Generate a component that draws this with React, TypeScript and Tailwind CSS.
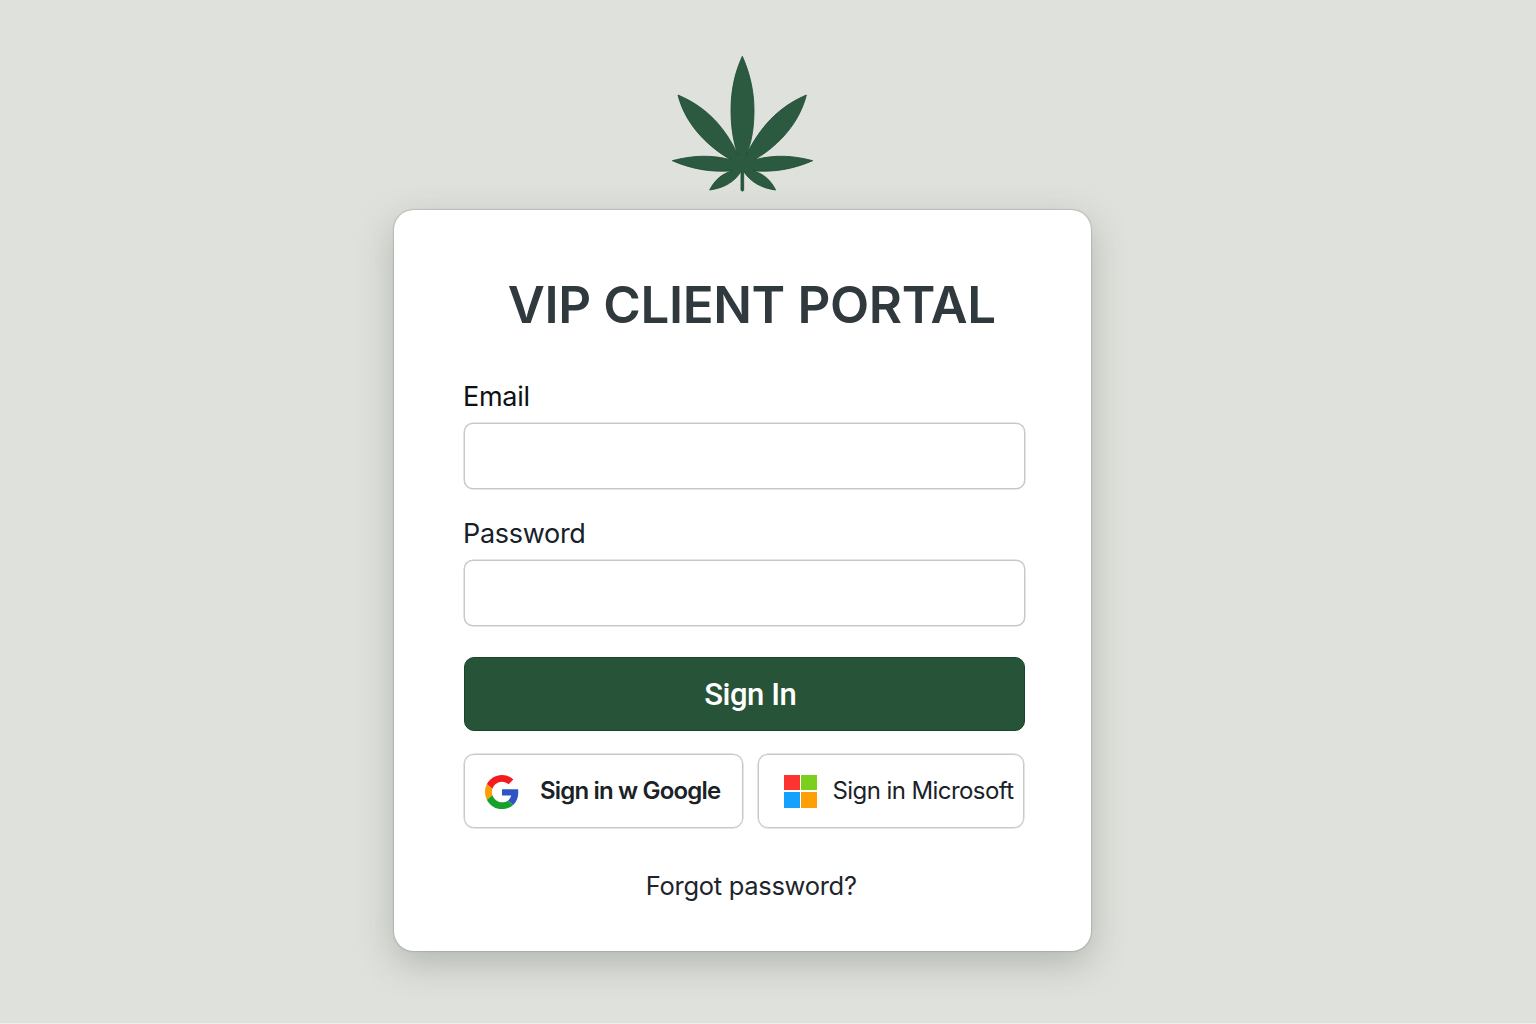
import React from "react";

function Leaf() {
  return (
    <svg width="162" height="152" viewBox="0 0 486 456" className="shrink-0" fill="#2b5a40" aria-hidden="true">
      <g stroke="#1d4b31" strokeWidth="2.5" strokeLinejoin="miter">
        <path d="M241 31C219 78 207 132 207 192C207 247 215 291 228 327C190 246 136 184 48 147C68 228 128 296 206 341C145 325 88 329 31 344C88 369 148 380 211 374C180 383 158 402 143 432C186 426 218 408 237 376L237 433Q241 438 245 433L245 376C265 408 298 426 341 432C326 402 304 383 273 374C336 380 395 369 452 344C395 329 340 325 278 341C354 296 413 228 433 147C346 184 293 246 253 327C268 291 276 247 276 192C276 132 262 78 241 31Z" />
      </g>
    </svg>
  );
}

function GoogleLogo() {
  return (
    <svg width="34" height="34" viewBox="0 0 48 48" className="relative top-[1px] shrink-0" aria-hidden="true">
      <path fill="#f31b1c" d="M24 9.5c3.54 0 6.71 1.22 9.21 3.6l6.85-6.85C35.9 2.38 30.47 0 24 0 14.62 0 6.51 5.38 2.56 13.22l7.98 6.19C12.43 13.72 17.74 9.5 24 9.5z" />
      <path fill="#2f55c5" d="M46.98 24.55c0-1.57-.15-3.09-.38-4.55H24v9.02h12.94c-.58 2.96-2.26 5.48-4.78 7.18l7.73 6c4.51-4.18 7.09-10.36 7.09-17.65z" />
      <path fill="#ff9d05" d="M10.53 28.59c-.48-1.45-.76-2.99-.76-4.59s.27-3.14.76-4.59l-7.98-6.19C.92 16.46 0 20.12 0 24c0 3.88.92 7.54 2.56 10.78l7.97-6.19z" />
      <path fill="#17a02c" d="M24 48c6.48 0 11.93-2.13 15.89-5.81l-7.73-6c-2.15 1.45-4.92 2.3-8.16 2.3-6.26 0-11.57-4.22-13.47-9.91l-7.98 6.19C6.51 42.62 14.62 48 24 48z" />
    </svg>
  );
}

function MicrosoftLogo() {
  return (
    <span className="grid h-[33px] w-[33px] shrink-0 grid-cols-2 gap-[1.5px]">
      <span className="bg-[#fb3432]" />
      <span className="bg-[#7bd01d]" />
      <span className="bg-[#16a0fd]" />
      <span className="bg-[#fe9f05]" />
    </span>
  );
}

function Field({ id, label, type, className, labelClass }: { id: string; label: string; type: string; className: string; labelClass: string }) {
  return (
    <div className={className}>
      <label htmlFor={id} className={`-ml-px block h-9 text-[27px] leading-9 ${labelClass}`}>
        {label}
      </label>
      <input
        id={id}
        type={type}
        className="mt-2 block h-[66px] w-full rounded-[9px] border border-[#c6c9cb] bg-white px-4 text-2xl shadow-[0_0_0_0.5px_#c6c9cb] outline-none"
      />
    </div>
  );
}

export default function App() {
  return (
    <main className="flex h-[1024px] w-[1536px] flex-col items-center overflow-hidden border-b border-[#eceee9] bg-[#dfe2dc] pt-[46px] pr-[51px] font-['Inter',sans-serif]">
      <Leaf />
      <section className="mt-3 h-[741px] w-[697px] shrink-0 rounded-[20px] bg-white pt-[65px] pr-[66.5px] pl-[70px] shadow-[0_0_1px_0.5px_rgba(120,128,122,0.3),0_12px_36px_rgba(60,68,60,0.28)]">
        <h1 className="h-[60px] pl-[15px] text-center text-[51px] leading-[60px] font-semibold tracking-[-0.35px] whitespace-nowrap text-[#303a3e]">
          VIP CLIENT PORTAL
        </h1>
        <form className="flex flex-col" onSubmit={(e) => e.preventDefault()}>
          <Field id="email" label="Email" type="email" className="mt-[44px]" labelClass="tracking-[-0.3px] text-[#0d1114]" />
          <Field id="password" label="Password" type="password" className="mt-[27px]" labelClass="tracking-[-0.3px] text-[#17212a]" />
          <button className="mt-[31px] h-[74px] w-full rounded-[10px] border border-[#164529] bg-[#275439] pt-[2px] pl-[12px] font-['Roboto',sans-serif] text-[31px] font-medium tracking-[-0.45px] text-white">
            Sign In
          </button>
          <div className="mt-[23px] flex gap-[15px]">
            <button type="button" className="flex h-[74px] w-[279px] items-center gap-[21px] rounded-[10px] border border-[#c6c9cb] pl-[20px] text-[24px] font-semibold tracking-[-0.83px] whitespace-nowrap text-[#1a2228] shadow-[0_0_0_0.5px_#c6c9cb]">
              <GoogleLogo />
              Sign in w Google
            </button>
            <button type="button" className="flex h-[74px] w-[266px] items-center gap-[15.5px] rounded-[10px] border border-[#c6c9cb] pl-[25px] text-[24px] tracking-[-0.58px] whitespace-nowrap text-[#1a2228] shadow-[0_0_0_0.5px_#c6c9cb]">
              <MicrosoftLogo />
              Sign in Microsoft
            </button>
          </div>
        </form>
        <a href="#" className="mt-10 block pl-[14px] text-center text-[25.5px] leading-9 tracking-[-0.3px] text-[#1d252b]">
          Forgot password?
        </a>
      </section>
    </main>
  );
}
